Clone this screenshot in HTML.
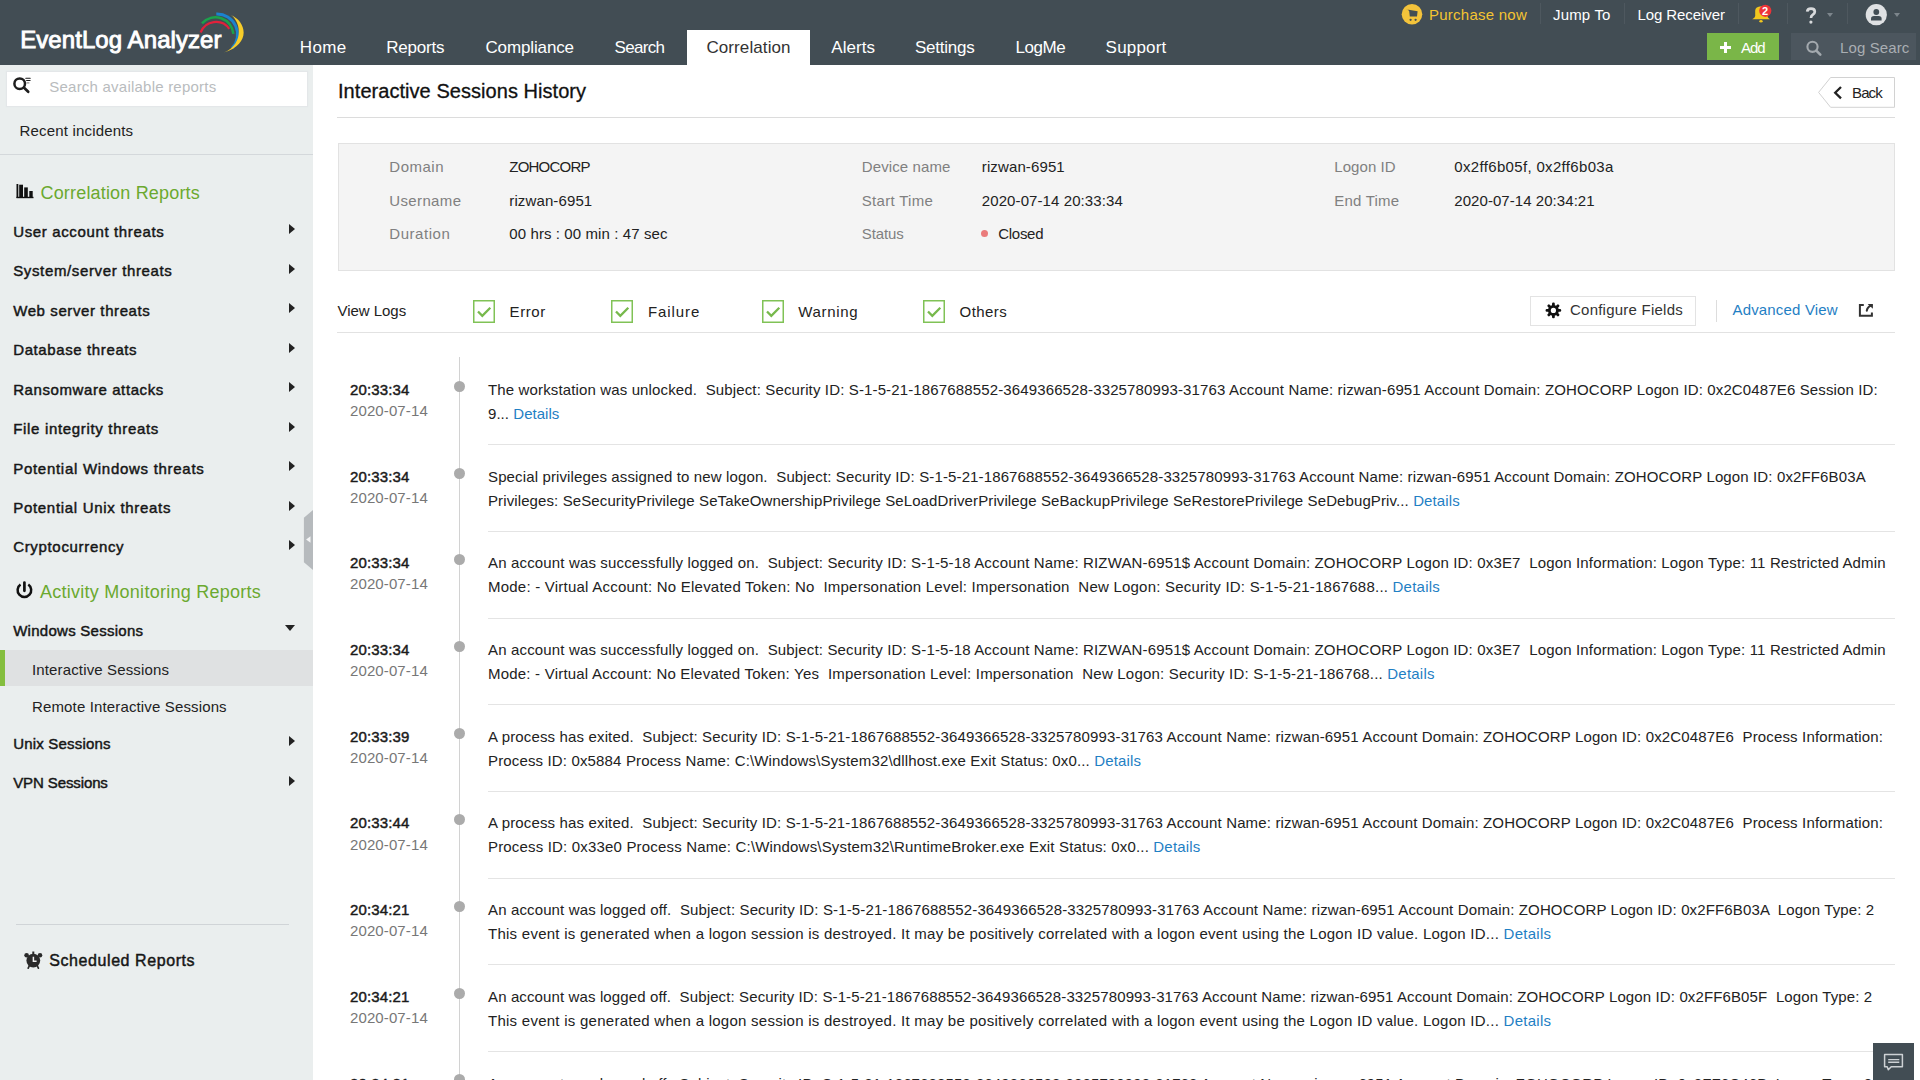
<!DOCTYPE html>
<html><head><meta charset="utf-8"><title>Interactive Sessions History</title>
<style>
html,body{margin:0;padding:0}
body{width:1920px;height:1080px;overflow:hidden;position:relative;background:#fff;font-family:"Liberation Sans",sans-serif}
.t{position:absolute;white-space:pre;line-height:1}
</style></head><body>
<div style="position:absolute;left:0px;top:0px;width:1920px;height:65px;background:#424d54"></div>
<div class="t" style="left:20.20px;top:28px;font-size:24px;color:#fff;-webkit-text-stroke:0.9px #fff;letter-spacing:0.075px;">EventLog Analyzer</div>
<svg style="position:absolute;left:190px;top:8px" width="60" height="50" viewBox="190 8 60 50">
<path d="M200.6 32.5 A16.4 16.4 0 0 1 229.3 28.8" stroke="#e1213b" stroke-width="2.2" fill="none"/>
<path d="M202 23.3 A18 18 0 0 1 233.4 33.9" stroke="#1ba24b" stroke-width="2.5" fill="none"/>
<path d="M216.3 14 A20.4 20.4 0 0 1 232 48.3" stroke="#1b83cf" stroke-width="2.8" fill="none"/>
<path d="M231 15 C247 22 251 44 224 52.5 C244 44 241 22 231 15 Z" fill="#f7cd2a"/>
</svg>
<div style="position:absolute;left:687px;top:30px;width:123px;height:35px;background:#fff"></div>
<div class="t" style="left:299.80px;top:39px;font-size:17px;color:#fff;letter-spacing:0.367px;">Home</div>
<div class="t" style="left:386.20px;top:39px;font-size:17px;color:#fff;letter-spacing:-0.200px;">Reports</div>
<div class="t" style="left:485.40px;top:39px;font-size:17px;color:#fff;letter-spacing:-0.122px;">Compliance</div>
<div class="t" style="left:614.60px;top:39px;font-size:17px;color:#fff;letter-spacing:-0.680px;">Search</div>
<div class="t" style="left:831.30px;top:39px;font-size:17px;color:#fff;letter-spacing:0.040px;">Alerts</div>
<div class="t" style="left:915.00px;top:39px;font-size:17px;color:#fff;letter-spacing:-0.229px;">Settings</div>
<div class="t" style="left:1015.40px;top:39px;font-size:17px;color:#fff;letter-spacing:-0.425px;">LogMe</div>
<div class="t" style="left:1105.60px;top:39px;font-size:17px;color:#fff;letter-spacing:0.200px;">Support</div>
<div class="t" style="left:706.40px;top:39px;font-size:17px;color:#333;letter-spacing:0.100px;">Correlation</div>
<svg style="position:absolute;left:1400px;top:2px;" width="25" height="25" viewBox="1400 2 25 25"><circle cx="1412" cy="14.2" r="10.3" fill="#f3c33b"/>
<path d="M1405.6 9.2 L1407.8 9.6 L1409.2 11.2 L1409.8 16.6 L1417 16.6 L1417.6 11.2 Z" fill="#424d54"/>
<circle cx="1410.6" cy="19.8" r="1.15" fill="#424d54"/><circle cx="1415.6" cy="19.8" r="1.15" fill="#424d54"/></svg>
<div class="t" style="left:1429.00px;top:7px;font-size:15px;color:#f4c431;letter-spacing:0.245px;">Purchase now</div>
<div style="position:absolute;left:1539.5px;top:3px;width:1px;height:21px;background:#4e585f"></div>
<div style="position:absolute;left:1623.5px;top:3px;width:1px;height:21px;background:#4e585f"></div>
<div style="position:absolute;left:1738px;top:3px;width:1px;height:21px;background:#4e585f"></div>
<div style="position:absolute;left:1786.5px;top:3px;width:1px;height:21px;background:#4e585f"></div>
<div style="position:absolute;left:1847px;top:3px;width:1px;height:21px;background:#4e585f"></div>
<div class="t" style="left:1553.00px;top:7px;font-size:15px;color:#fff;letter-spacing:0.167px;">Jump To</div>
<div class="t" style="left:1637.50px;top:7px;font-size:15px;color:#fff;letter-spacing:-0.091px;">Log Receiver</div>
<svg style="position:absolute;left:1748px;top:2px;" width="28" height="24" viewBox="1748 2 28 24"><path d="M1752.2 19.2 L1770 19.2 Q1767.6 17.8 1767.4 16 L1767.4 10.5 Q1767.2 6.6 1761.2 6.3 Q1755.4 6.6 1755.2 10.5 L1755.2 16 Q1755 17.8 1752.2 19.2 Z" fill="#f2c71e"/>
<ellipse cx="1761" cy="21.3" rx="1.7" ry="1.2" fill="#f2c71e"/>
<circle cx="1765.3" cy="10.8" r="6.1" fill="#ee3338"/></svg>
<div class="t" style="left:1762.00px;top:6.199999999999999px;font-size:11px;color:#fff;font-weight:bold;">2</div>
<svg style="position:absolute;left:1802px;top:5px;" width="18" height="21" viewBox="1802 5 18 21"><path d="M1807.2 11.6 Q1807.4 8.6 1811 8.6 Q1814.8 8.6 1814.8 11.7 Q1814.8 13.6 1812.6 14.9 Q1811 15.9 1811 18" stroke="#d8dadc" stroke-width="2.7" fill="none"/>
<circle cx="1810.9" cy="22.1" r="1.6" fill="#d8dadc"/></svg>
<div style="position:absolute;left:1826.5px;top:13px;width:0;height:0;border-left:3.5px solid transparent;border-right:3.5px solid transparent;border-top:4px solid #7d868c"></div>
<svg style="position:absolute;left:1862px;top:1px;" width="28" height="28" viewBox="1862 1 28 28"><circle cx="1876.3" cy="14.7" r="10.6" fill="#dfe1e3"/>
<circle cx="1876.3" cy="12" r="2.9" fill="#424d54"/>
<path d="M1871 20.6 L1871 18.6 Q1871 15.9 1874 15.9 L1878.6 15.9 Q1881.6 15.9 1881.6 18.6 L1881.6 20.6 Z" fill="#424d54"/></svg>
<div style="position:absolute;left:1894px;top:13px;width:0;height:0;border-left:3.5px solid transparent;border-right:3.5px solid transparent;border-top:4px solid #7d868c"></div>
<div style="position:absolute;left:1707px;top:33px;width:72px;height:27px;background:#7ab648"></div>
<div style="position:absolute;left:1720px;top:46.1px;width:11px;height:2.6px;background:#fff"></div>
<div style="position:absolute;left:1724.1px;top:42px;width:2.6px;height:10.8px;background:#fff"></div>
<div class="t" style="left:1741.00px;top:40px;font-size:15px;color:#fff;letter-spacing:-1.000px;">Add</div>
<div style="position:absolute;left:1791px;top:33px;width:125px;height:27px;background:#4c565e"></div>
<svg style="position:absolute;left:1800px;top:36px;" width="26" height="24" viewBox="1800 36 26 24"><circle cx="1812.5" cy="46.8" r="5.1" stroke="#a3a9ae" stroke-width="2.1" fill="none"/>
<path d="M1816.3 50.6 L1820.3 54.6" stroke="#a3a9ae" stroke-width="2.6" stroke-linecap="round"/></svg>
<div style="position:absolute;left:1791px;top:33px;width:119px;height:27px;overflow:hidden">
<div class="t" style="left:49.00px;top:7.399999999999999px;font-size:15px;color:#a9aeb3;letter-spacing:0.111px;">Log Search</div>
</div>
<div style="position:absolute;left:0px;top:65px;width:313px;height:1015px;background:#eaeeee"></div>
<div style="position:absolute;left:6px;top:71px;width:301.5px;height:36.2px;background:#fff;box-sizing:border-box;border:1px solid #e4e7e9;box-shadow:0 0 1px #dfe3e6"></div>
<svg style="position:absolute;left:10px;top:74px;" width="24" height="22" viewBox="10 74 24 22"><circle cx="19.7" cy="83.7" r="5.3" stroke="#1e1e1e" stroke-width="2.5" fill="none"/>
<path d="M23.8 87.6 L28.2 91.8" stroke="#1e1e1e" stroke-width="2.7" stroke-linecap="round"/>
<path d="M25.8 78.2 H30.2 M26.6 80.5 H30.1" stroke="#1e1e1e" stroke-width="1.1" stroke-linecap="round"/>
<path d="M26.8 82.9 H29" stroke="#777" stroke-width="1" stroke-linecap="round"/></svg>
<div class="t" style="left:49.30px;top:79px;font-size:15px;color:#b9bcbe;letter-spacing:0.222px;">Search available reports</div>
<div class="t" style="left:19.40px;top:123px;font-size:15px;color:#222;letter-spacing:0.187px;">Recent incidents</div>
<div style="position:absolute;left:0px;top:154px;width:313px;height:1px;background:#d4d8db"></div>
<svg style="position:absolute;left:14px;top:182px;" width="22" height="18" viewBox="14 182 22 18"><g fill="#111"><rect x="16.5" y="184" width="1.8" height="14"/><rect x="19.2" y="184.7" width="3.8" height="13.3"/>
<rect x="24.2" y="187.4" width="3.6" height="10.6"/><rect x="29.3" y="191" width="3.4" height="7"/>
<rect x="16.5" y="196.8" width="17" height="1.4"/></g></svg>
<div class="t" style="left:40.50px;top:184px;font-size:18px;color:#6ba92f;letter-spacing:0.178px;">Correlation Reports</div>
<div class="t" style="left:13.20px;top:224px;font-size:15px;color:#161616;-webkit-text-stroke:0.45px #161616;letter-spacing:0.637px;">User account threats</div>
<div style="position:absolute;left:288.5px;top:224.4px;width:0;height:0;border-top:5px solid transparent;border-bottom:5px solid transparent;border-left:6px solid #222"></div>
<div class="t" style="left:13.20px;top:263px;font-size:15px;color:#161616;-webkit-text-stroke:0.45px #161616;letter-spacing:0.640px;">System/server threats</div>
<div style="position:absolute;left:288.5px;top:263.9px;width:0;height:0;border-top:5px solid transparent;border-bottom:5px solid transparent;border-left:6px solid #222"></div>
<div class="t" style="left:13.20px;top:303px;font-size:15px;color:#161616;-webkit-text-stroke:0.45px #161616;letter-spacing:0.600px;">Web server threats</div>
<div style="position:absolute;left:288.5px;top:303.3px;width:0;height:0;border-top:5px solid transparent;border-bottom:5px solid transparent;border-left:6px solid #222"></div>
<div class="t" style="left:13.20px;top:342px;font-size:15px;color:#161616;-webkit-text-stroke:0.45px #161616;letter-spacing:0.613px;">Database threats</div>
<div style="position:absolute;left:288.5px;top:342.8px;width:0;height:0;border-top:5px solid transparent;border-bottom:5px solid transparent;border-left:6px solid #222"></div>
<div class="t" style="left:13.20px;top:382px;font-size:15px;color:#161616;-webkit-text-stroke:0.45px #161616;letter-spacing:0.588px;">Ransomware attacks</div>
<div style="position:absolute;left:288.5px;top:382.2px;width:0;height:0;border-top:5px solid transparent;border-bottom:5px solid transparent;border-left:6px solid #222"></div>
<div class="t" style="left:13.20px;top:421px;font-size:15px;color:#161616;-webkit-text-stroke:0.45px #161616;letter-spacing:0.676px;">File integrity threats</div>
<div style="position:absolute;left:288.5px;top:421.7px;width:0;height:0;border-top:5px solid transparent;border-bottom:5px solid transparent;border-left:6px solid #222"></div>
<div class="t" style="left:13.20px;top:461px;font-size:15px;color:#161616;-webkit-text-stroke:0.45px #161616;letter-spacing:0.717px;">Potential Windows threats</div>
<div style="position:absolute;left:288.5px;top:461.1px;width:0;height:0;border-top:5px solid transparent;border-bottom:5px solid transparent;border-left:6px solid #222"></div>
<div class="t" style="left:13.20px;top:500px;font-size:15px;color:#161616;-webkit-text-stroke:0.45px #161616;letter-spacing:0.700px;">Potential Unix threats</div>
<div style="position:absolute;left:288.5px;top:500.6px;width:0;height:0;border-top:5px solid transparent;border-bottom:5px solid transparent;border-left:6px solid #222"></div>
<div class="t" style="left:13.20px;top:539px;font-size:15px;color:#161616;-webkit-text-stroke:0.45px #161616;letter-spacing:0.669px;">Cryptocurrency</div>
<div style="position:absolute;left:288.5px;top:540.0px;width:0;height:0;border-top:5px solid transparent;border-bottom:5px solid transparent;border-left:6px solid #222"></div>
<svg style="position:absolute;left:14px;top:578px;" width="22" height="24" viewBox="14 578 22 24"><path d="M20.5 584.6 A6.8 6.8 0 1 0 28.3 584.6" stroke="#111" stroke-width="2.5" fill="none"/>
<path d="M24.4 582.5 V590.8" stroke="#111" stroke-width="2.7" stroke-linecap="round"/></svg>
<div class="t" style="left:40.00px;top:582.5px;font-size:18px;color:#6ba92f;letter-spacing:0.258px;">Activity Monitoring Reports</div>
<div class="t" style="left:13.20px;top:623px;font-size:15px;color:#161616;-webkit-text-stroke:0.45px #161616;letter-spacing:0.267px;">Windows Sessions</div>
<div style="position:absolute;left:285px;top:625px;width:0;height:0;border-left:5px solid transparent;border-right:5px solid transparent;border-top:6px solid #222"></div>
<div style="position:absolute;left:0px;top:650px;width:313px;height:36px;background:#dfe1e2"></div>
<div style="position:absolute;left:0px;top:650px;width:5px;height:36px;background:#84be3e"></div>
<div class="t" style="left:32.00px;top:662px;font-size:15px;color:#222;letter-spacing:0.142px;">Interactive Sessions</div>
<div class="t" style="left:32.00px;top:699px;font-size:15px;color:#222;letter-spacing:0.142px;">Remote Interactive Sessions</div>
<div class="t" style="left:13.20px;top:736px;font-size:15px;color:#161616;-webkit-text-stroke:0.45px #161616;letter-spacing:0.192px;">Unix Sessions</div>
<div style="position:absolute;left:288.5px;top:736px;width:0;height:0;border-top:5px solid transparent;border-bottom:5px solid transparent;border-left:6px solid #222"></div>
<div class="t" style="left:13.20px;top:775px;font-size:15px;color:#161616;-webkit-text-stroke:0.45px #161616;letter-spacing:-0.109px;">VPN Sessions</div>
<div style="position:absolute;left:288.5px;top:775.5px;width:0;height:0;border-top:5px solid transparent;border-bottom:5px solid transparent;border-left:6px solid #222"></div>
<div style="position:absolute;left:16px;top:924px;width:273px;height:1px;background:#d0d4d7"></div>
<svg style="position:absolute;left:22px;top:948px;" width="22" height="24" viewBox="22 948 22 24"><g fill="#2a2a2a"><circle cx="33.3" cy="960.6" r="6.9"/>
<circle cx="26.6" cy="955.3" r="2.3"/><circle cx="40" cy="955.3" r="2.3"/>
<rect x="32.3" y="951.5" width="2" height="2.5"/></g>
<path d="M29.5 965.5 L28.2 968.2 M37.1 965.5 L38.4 968.2" stroke="#2a2a2a" stroke-width="1.7" stroke-linecap="round"/>
<path d="M33.4 956.8 V961.2 H36.6" stroke="#f0f0f0" stroke-width="1.5" fill="none"/></svg>
<div class="t" style="left:49.30px;top:953px;font-size:16px;color:#161616;-webkit-text-stroke:0.45px #161616;letter-spacing:0.575px;">Scheduled Reports</div>
<svg style="position:absolute;left:302px;top:508px;" width="11" height="64" viewBox="302 508 11 64"><path d="M313 510 L313 570 L303.9 562.2 L303.9 517.8 Z" fill="#b6babd"/>
<path d="M306.1 539.5 L310.5 536.2 L310.5 542.8 Z" fill="#f4f5f6"/></svg>
<div class="t" style="left:338.00px;top:80.5px;font-size:20px;color:#111;-webkit-text-stroke:0.3px #111;letter-spacing:0.048px;">Interactive Sessions History</div>
<svg style="position:absolute;left:1815px;top:75px;" width="82" height="35" viewBox="1815 75 82 35"><path d="M1830.6 77.5 H1894.5 V107.3 H1830.6 L1818.6 92.4 Z" fill="#fff" stroke="#d2d2d2" stroke-width="1"/>
<path d="M1841 87 L1835.2 92.7 L1841 98.4" stroke="#222" stroke-width="2.3" fill="none"/></svg>
<div class="t" style="left:1852.00px;top:85px;font-size:15px;color:#222;letter-spacing:-0.867px;">Back</div>
<div style="position:absolute;left:337px;top:117px;width:1558px;height:1px;background:#dcdcdc"></div>
<div style="position:absolute;left:338px;top:143px;width:1557px;height:128px;background:#f4f4f4;box-sizing:border-box;border:1px solid #e2e2e2"></div>
<div class="t" style="left:389.30px;top:159px;font-size:15px;color:#808080;letter-spacing:0.500px;">Domain</div>
<div class="t" style="left:389.30px;top:193px;font-size:15px;color:#808080;letter-spacing:0.357px;">Username</div>
<div class="t" style="left:389.30px;top:226px;font-size:15px;color:#808080;letter-spacing:0.543px;">Duration</div>
<div class="t" style="left:509.30px;top:159px;font-size:15px;color:#222;letter-spacing:-0.786px;">ZOHOCORP</div>
<div class="t" style="left:509.30px;top:193px;font-size:15px;color:#222;letter-spacing:0.120px;">rizwan-6951</div>
<div class="t" style="left:509.30px;top:226px;font-size:15px;color:#222;letter-spacing:0.096px;">00 hrs : 00 min : 47 sec</div>
<div class="t" style="left:861.80px;top:159px;font-size:15px;color:#808080;letter-spacing:0.100px;">Device name</div>
<div class="t" style="left:861.80px;top:193px;font-size:15px;color:#808080;letter-spacing:0.300px;">Start Time</div>
<div class="t" style="left:861.80px;top:226px;font-size:15px;color:#808080;letter-spacing:-0.100px;">Status</div>
<div class="t" style="left:981.80px;top:159px;font-size:15px;color:#222;letter-spacing:0.120px;">rizwan-6951</div>
<div class="t" style="left:981.80px;top:193px;font-size:15px;color:#222;letter-spacing:0.094px;">2020-07-14 20:33:34</div>
<div style="position:absolute;left:980.5px;top:230.3px;width:7px;height:7px;border-radius:50%;background:#ea7b7b"></div>
<div class="t" style="left:998.30px;top:226px;font-size:15px;color:#222;letter-spacing:-0.300px;">Closed</div>
<div class="t" style="left:1334.30px;top:159px;font-size:15px;color:#808080;letter-spacing:0.071px;">Logon ID</div>
<div class="t" style="left:1334.30px;top:193px;font-size:15px;color:#808080;letter-spacing:0.214px;">End Time</div>
<div class="t" style="left:1454.30px;top:159px;font-size:15px;color:#222;letter-spacing:0.333px;">0x2ff6b05f, 0x2ff6b03a</div>
<div class="t" style="left:1454.30px;top:193px;font-size:15px;color:#222;letter-spacing:0.056px;">2020-07-14 20:34:21</div>
<div class="t" style="left:337.50px;top:302.5px;font-size:15px;color:#222;letter-spacing:-0.037px;">View Logs</div>
<svg style="position:absolute;left:473px;top:300px" width="22" height="23" viewBox="0 0 22 23">
<rect x="0.75" y="0.75" width="20.5" height="21.5" fill="#fff" stroke="#80c256" stroke-width="1.5"/>
<path d="M5 11.5 L9.3 15.8 L17.3 7.8" stroke="#77b94c" stroke-width="2.3" fill="none"/></svg>
<div class="t" style="left:509.60px;top:304px;font-size:15px;color:#222;letter-spacing:0.575px;">Error</div>
<svg style="position:absolute;left:611px;top:300px" width="22" height="23" viewBox="0 0 22 23">
<rect x="0.75" y="0.75" width="20.5" height="21.5" fill="#fff" stroke="#80c256" stroke-width="1.5"/>
<path d="M5 11.5 L9.3 15.8 L17.3 7.8" stroke="#77b94c" stroke-width="2.3" fill="none"/></svg>
<div class="t" style="left:648.00px;top:304px;font-size:15px;color:#222;letter-spacing:0.917px;">Failure</div>
<svg style="position:absolute;left:762px;top:300px" width="22" height="23" viewBox="0 0 22 23">
<rect x="0.75" y="0.75" width="20.5" height="21.5" fill="#fff" stroke="#80c256" stroke-width="1.5"/>
<path d="M5 11.5 L9.3 15.8 L17.3 7.8" stroke="#77b94c" stroke-width="2.3" fill="none"/></svg>
<div class="t" style="left:798.30px;top:304px;font-size:15px;color:#222;letter-spacing:0.650px;">Warning</div>
<svg style="position:absolute;left:923px;top:300px" width="22" height="23" viewBox="0 0 22 23">
<rect x="0.75" y="0.75" width="20.5" height="21.5" fill="#fff" stroke="#80c256" stroke-width="1.5"/>
<path d="M5 11.5 L9.3 15.8 L17.3 7.8" stroke="#77b94c" stroke-width="2.3" fill="none"/></svg>
<div class="t" style="left:959.60px;top:304px;font-size:15px;color:#222;letter-spacing:0.420px;">Others</div>
<div style="position:absolute;left:1530px;top:296px;width:166px;height:30px;background:#fff;box-sizing:border-box;border:1px solid #e3e3e3"></div>
<svg style="position:absolute;left:1543px;top:300px;" width="21" height="21" viewBox="1543 300 21 21"><g fill="#111"><circle cx="1553.4" cy="310.4" r="5.4"/>
<rect x="1552" y="302.6" width="2.8" height="15.6" rx="1.2"/><rect x="1545.6" y="309" width="15.6" height="2.8" ry="1.2"/>
<rect x="1552" y="302.6" width="2.8" height="15.6" rx="1.2" transform="rotate(45 1553.4 310.4)"/><rect x="1552" y="302.6" width="2.8" height="15.6" rx="1.2" transform="rotate(-45 1553.4 310.4)"/></g>
<circle cx="1553.4" cy="310.4" r="2.6" fill="#fff"/></svg>
<div class="t" style="left:1570.00px;top:302px;font-size:15px;color:#333;letter-spacing:0.233px;">Configure Fields</div>
<div style="position:absolute;left:1715.5px;top:300px;width:1px;height:22px;background:#dddddd"></div>
<div class="t" style="left:1732.50px;top:302px;font-size:15px;color:#1f80c4;letter-spacing:0.167px;">Advanced View</div>
<svg style="position:absolute;left:1855px;top:301px;" width="21" height="19" viewBox="1855 301 21 19"><path d="M1863.8 305 H1859.9 V315.7 H1871.9 V312.4" stroke="#333" stroke-width="2" fill="none"/>
<path d="M1867.6 304 H1872.9 V308.7 Z" fill="#333"/>
<path d="M1871.5 305.4 Q1867.5 306.5 1866.8 310.6" stroke="#333" stroke-width="2.1" fill="none" stroke-linecap="round"/></svg>
<div style="position:absolute;left:337px;top:332px;width:1558px;height:1px;background:#e2e2e2"></div>
<div style="position:absolute;left:459px;top:357px;width:1px;height:723px;background:#d2d2d2"></div>
<div class="t" style="left:350.00px;top:382px;font-size:15px;color:#1a1a1a;-webkit-text-stroke:0.45px #1a1a1a;letter-spacing:0.143px;">20:33:34</div>
<div class="t" style="left:350.00px;top:403px;font-size:15px;color:#777;letter-spacing:0.111px;">2020-07-14</div>
<div style="position:absolute;left:454px;top:380.8px;width:11px;height:11px;border-radius:50%;background:#ababab"></div>
<div class="t" style="left:488.00px;top:382px;font-size:15px;color:#222;letter-spacing:0.137px;">The workstation was unlocked.  Subject: Security ID: S-1-5-21-1867688552-3649366528-3325780993-31763 Account Name: rizwan-6951 Account Domain: ZOHOCORP Logon ID: 0x2C0487E6 Session ID:</div>
<div class="t" style="left:488.00px;top:406px;font-size:15px;color:#222;letter-spacing:0.045px">9... <span style="color:#1f80c4">Details</span></div>
<div style="position:absolute;left:488px;top:444px;width:1407px;height:1px;background:#e4e4e4"></div>
<div class="t" style="left:350.00px;top:469px;font-size:15px;color:#1a1a1a;-webkit-text-stroke:0.45px #1a1a1a;letter-spacing:0.143px;">20:33:34</div>
<div class="t" style="left:350.00px;top:490px;font-size:15px;color:#777;letter-spacing:0.111px;">2020-07-14</div>
<div style="position:absolute;left:454px;top:467.5px;width:11px;height:11px;border-radius:50%;background:#ababab"></div>
<div class="t" style="left:488.00px;top:469px;font-size:15px;color:#222;letter-spacing:0.130px;">Special privileges assigned to new logon.  Subject: Security ID: S-1-5-21-1867688552-3649366528-3325780993-31763 Account Name: rizwan-6951 Account Domain: ZOHOCORP Logon ID: 0x2FF6B03A</div>
<div class="t" style="left:488.00px;top:493px;font-size:15px;color:#222;letter-spacing:0.108px">Privileges: SeSecurityPrivilege SeTakeOwnershipPrivilege SeLoadDriverPrivilege SeBackupPrivilege SeRestorePrivilege SeDebugPriv... <span style="color:#1f80c4">Details</span></div>
<div style="position:absolute;left:488px;top:531px;width:1407px;height:1px;background:#e4e4e4"></div>
<div class="t" style="left:350.00px;top:555px;font-size:15px;color:#1a1a1a;-webkit-text-stroke:0.45px #1a1a1a;letter-spacing:0.143px;">20:33:34</div>
<div class="t" style="left:350.00px;top:576px;font-size:15px;color:#777;letter-spacing:0.111px;">2020-07-14</div>
<div style="position:absolute;left:454px;top:554.2px;width:11px;height:11px;border-radius:50%;background:#ababab"></div>
<div class="t" style="left:488.00px;top:555px;font-size:15px;color:#222;letter-spacing:0.154px;">An account was successfully logged on.  Subject: Security ID: S-1-5-18 Account Name: RIZWAN-6951$ Account Domain: ZOHOCORP Logon ID: 0x3E7  Logon Information: Logon Type: 11 Restricted Admin</div>
<div class="t" style="left:488.00px;top:579px;font-size:15px;color:#222;letter-spacing:0.225px">Mode: - Virtual Account: No Elevated Token: No  Impersonation Level: Impersonation  New Logon: Security ID: S-1-5-21-1867688... <span style="color:#1f80c4">Details</span></div>
<div style="position:absolute;left:488px;top:618px;width:1407px;height:1px;background:#e4e4e4"></div>
<div class="t" style="left:350.00px;top:642px;font-size:15px;color:#1a1a1a;-webkit-text-stroke:0.45px #1a1a1a;letter-spacing:0.143px;">20:33:34</div>
<div class="t" style="left:350.00px;top:663px;font-size:15px;color:#777;letter-spacing:0.111px;">2020-07-14</div>
<div style="position:absolute;left:454px;top:640.9px;width:11px;height:11px;border-radius:50%;background:#ababab"></div>
<div class="t" style="left:488.00px;top:642px;font-size:15px;color:#222;letter-spacing:0.154px;">An account was successfully logged on.  Subject: Security ID: S-1-5-18 Account Name: RIZWAN-6951$ Account Domain: ZOHOCORP Logon ID: 0x3E7  Logon Information: Logon Type: 11 Restricted Admin</div>
<div class="t" style="left:488.00px;top:666px;font-size:15px;color:#222;letter-spacing:0.210px">Mode: - Virtual Account: No Elevated Token: Yes  Impersonation Level: Impersonation  New Logon: Security ID: S-1-5-21-186768... <span style="color:#1f80c4">Details</span></div>
<div style="position:absolute;left:488px;top:704px;width:1407px;height:1px;background:#e4e4e4"></div>
<div class="t" style="left:350.00px;top:729px;font-size:15px;color:#1a1a1a;-webkit-text-stroke:0.45px #1a1a1a;letter-spacing:0.143px;">20:33:39</div>
<div class="t" style="left:350.00px;top:750px;font-size:15px;color:#777;letter-spacing:0.111px;">2020-07-14</div>
<div style="position:absolute;left:454px;top:727.6px;width:11px;height:11px;border-radius:50%;background:#ababab"></div>
<div class="t" style="left:488.00px;top:729px;font-size:15px;color:#222;letter-spacing:0.150px;">A process has exited.  Subject: Security ID: S-1-5-21-1867688552-3649366528-3325780993-31763 Account Name: rizwan-6951 Account Domain: ZOHOCORP Logon ID: 0x2C0487E6  Process Information:</div>
<div class="t" style="left:488.00px;top:753px;font-size:15px;color:#222;letter-spacing:0.149px">Process ID: 0x5884 Process Name: C:\Windows\System32\dllhost.exe Exit Status: 0x0... <span style="color:#1f80c4">Details</span></div>
<div style="position:absolute;left:488px;top:791px;width:1407px;height:1px;background:#e4e4e4"></div>
<div class="t" style="left:350.00px;top:815px;font-size:15px;color:#1a1a1a;-webkit-text-stroke:0.45px #1a1a1a;letter-spacing:0.143px;">20:33:44</div>
<div class="t" style="left:350.00px;top:837px;font-size:15px;color:#777;letter-spacing:0.111px;">2020-07-14</div>
<div style="position:absolute;left:454px;top:814.3px;width:11px;height:11px;border-radius:50%;background:#ababab"></div>
<div class="t" style="left:488.00px;top:815px;font-size:15px;color:#222;letter-spacing:0.150px;">A process has exited.  Subject: Security ID: S-1-5-21-1867688552-3649366528-3325780993-31763 Account Name: rizwan-6951 Account Domain: ZOHOCORP Logon ID: 0x2C0487E6  Process Information:</div>
<div class="t" style="left:488.00px;top:839px;font-size:15px;color:#222;letter-spacing:0.175px">Process ID: 0x33e0 Process Name: C:\Windows\System32\RuntimeBroker.exe Exit Status: 0x0... <span style="color:#1f80c4">Details</span></div>
<div style="position:absolute;left:488px;top:878px;width:1407px;height:1px;background:#e4e4e4"></div>
<div class="t" style="left:350.00px;top:902px;font-size:15px;color:#1a1a1a;-webkit-text-stroke:0.45px #1a1a1a;letter-spacing:0.143px;">20:34:21</div>
<div class="t" style="left:350.00px;top:923px;font-size:15px;color:#777;letter-spacing:0.111px;">2020-07-14</div>
<div style="position:absolute;left:454px;top:901.0px;width:11px;height:11px;border-radius:50%;background:#ababab"></div>
<div class="t" style="left:488.00px;top:902px;font-size:15px;color:#222;letter-spacing:0.134px;">An account was logged off.  Subject: Security ID: S-1-5-21-1867688552-3649366528-3325780993-31763 Account Name: rizwan-6951 Account Domain: ZOHOCORP Logon ID: 0x2FF6B03A  Logon Type: 2</div>
<div class="t" style="left:488.00px;top:926px;font-size:15px;color:#222;letter-spacing:0.259px">This event is generated when a logon session is destroyed. It may be positively correlated with a logon event using the Logon ID value. Logon ID... <span style="color:#1f80c4">Details</span></div>
<div style="position:absolute;left:488px;top:964px;width:1407px;height:1px;background:#e4e4e4"></div>
<div class="t" style="left:350.00px;top:989px;font-size:15px;color:#1a1a1a;-webkit-text-stroke:0.45px #1a1a1a;letter-spacing:0.143px;">20:34:21</div>
<div class="t" style="left:350.00px;top:1010px;font-size:15px;color:#777;letter-spacing:0.111px;">2020-07-14</div>
<div style="position:absolute;left:454px;top:987.7px;width:11px;height:11px;border-radius:50%;background:#ababab"></div>
<div class="t" style="left:488.00px;top:989px;font-size:15px;color:#222;letter-spacing:0.123px;">An account was logged off.  Subject: Security ID: S-1-5-21-1867688552-3649366528-3325780993-31763 Account Name: rizwan-6951 Account Domain: ZOHOCORP Logon ID: 0x2FF6B05F  Logon Type: 2</div>
<div class="t" style="left:488.00px;top:1013px;font-size:15px;color:#222;letter-spacing:0.259px">This event is generated when a logon session is destroyed. It may be positively correlated with a logon event using the Logon ID value. Logon ID... <span style="color:#1f80c4">Details</span></div>
<div style="position:absolute;left:488px;top:1051px;width:1407px;height:1px;background:#e4e4e4"></div>
<div class="t" style="left:350.00px;top:1076px;font-size:15px;color:#1a1a1a;-webkit-text-stroke:0.45px #1a1a1a;letter-spacing:0.143px;">20:34:21</div>
<div class="t" style="left:350.00px;top:1097px;font-size:15px;color:#777;letter-spacing:0.111px;">2020-07-14</div>
<div style="position:absolute;left:454px;top:1074.4px;width:11px;height:11px;border-radius:50%;background:#ababab"></div>
<div class="t" style="left:488.00px;top:1076px;font-size:15px;color:#222;letter-spacing:0.113px;">An account was logged off.  Subject: Security ID: S-1-5-21-1867688552-3649366528-3325780993-31763 Account Name: rizwan-6951 Account Domain: ZOHOCORP Logon ID: 0x2FF6C46B  Logon Type: 2</div>
<div class="t" style="left:488.00px;top:1100px;font-size:15px;color:#222;letter-spacing:0.259px">This event is generated when a logon session is destroyed. It may be positively correlated with a logon event using the Logon ID value. Logon ID... <span style="color:#1f80c4">Details</span></div>
<div style="position:absolute;left:1873px;top:1043px;width:41px;height:37px;background:#424d54"></div>
<svg style="position:absolute;left:1880px;top:1050px;" width="28" height="24" viewBox="1880 1050 28 24"><path d="M1884.6 1054.6 H1902.4 V1066.8 H1891.2 L1888.3 1069.8 L1887.2 1066.8 H1884.6 Z" stroke="#cdd1d4" stroke-width="1.5" fill="none" stroke-linejoin="round"/>
<path d="M1888.2 1059.6 H1899.3 M1888.2 1062.3 H1899.3" stroke="#cdd1d4" stroke-width="1.4"/></svg>
</body></html>
